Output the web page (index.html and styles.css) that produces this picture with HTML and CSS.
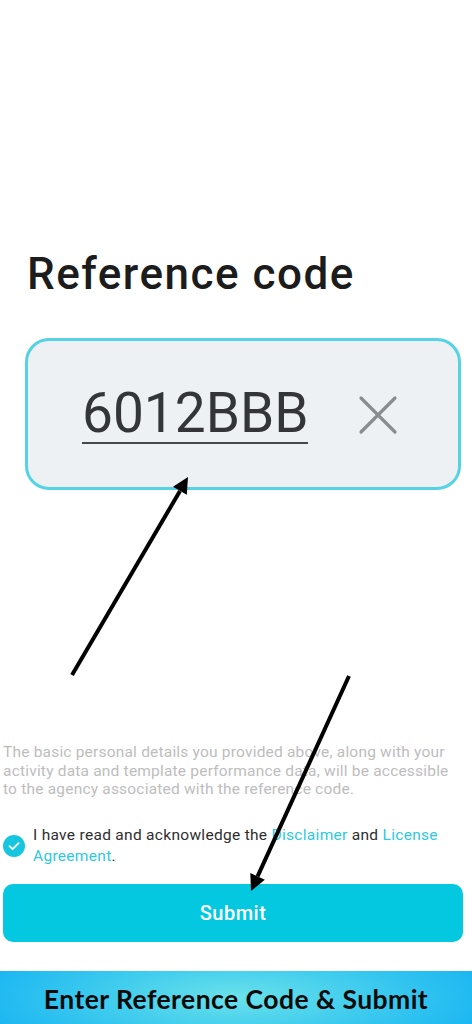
FILE: index.html
```html
<!DOCTYPE html>
<html lang="en">
<head>
<meta charset="utf-8">
<title>Reference code</title>
<link rel="stylesheet" href="styles.css">
</head>
<body>
<div class="screen">
  <h1 class="title">Reference code</h1>
  <div class="code-box">
    <span class="code-value">6012BBB</span>
    <svg class="clear-icon" viewBox="0 0 40 40" width="40" height="40" aria-hidden="true">
      <path d="M3 3 L37 37 M37 3 L3 37" stroke="#8a8d90" stroke-width="3.2" stroke-linecap="round" fill="none"/>
    </svg>
  </div>
  <p class="disclaimer">The basic personal details you provided above, along with your activity data and template performance data, will be accessible to the agency associated with the reference code.</p>
  <div class="agree-row">
    <span class="check">
      <svg viewBox="0 0 22 22" width="22" height="22" aria-hidden="true">
        <circle cx="11" cy="11" r="11" fill="#16c6df"/>
        <path d="M6.5 11.2 L9.6 14.2 L15.6 8.2" stroke="#ffffff" stroke-width="1.8" fill="none" stroke-linecap="round" stroke-linejoin="round"/>
      </svg>
    </span>
    <p class="agree-text">I have read and acknowledge the <a class="link">Disclaimer</a> and <a class="link">License Agreement</a>.</p>
  </div>
  <button class="submit">Submit</button>
  <div class="banner">Enter Reference Code &amp; Submit</div>

  <svg class="arrows" viewBox="0 0 472 1024" width="472" height="1024" aria-hidden="true">
    <line x1="72" y1="675" x2="180" y2="491" stroke="#000" stroke-width="4"/>
    <polygon points="188,477 186.8,494.8 173,486.8" fill="#000"/>
    <line x1="349" y1="676" x2="257.6" y2="876.4" stroke="#000" stroke-width="4"/>
    <polygon points="251,891 264.9,879.7 250.3,873.1" fill="#000"/>
  </svg>
</div>
</body>
</html>
```

FILE: styles.css
```css
html, body {
  margin: 0;
  padding: 0;
  background: #ffffff;
}

.screen {
  position: relative;
  width: 472px;
  height: 1024px;
  overflow: hidden;
  padding-top: 248px;
  box-sizing: border-box;
  display: flex;
  flex-direction: column;
  font-family: Roboto, "Noto Sans", "Liberation Sans", sans-serif;
}

.title {
  margin: 0 0 0 27px;
  font-size: 44px;
  line-height: 52px;
  font-weight: 500;
  color: #1c1c1c;
  letter-spacing: 1.5px;
}

.code-box {
  margin: 38px 0 0 25px;
  width: 436px;
  height: 152px;
  box-sizing: border-box;
  border: 3px solid #55d3e4;
  border-radius: 24px;
  background: #eef1f3;
  display: flex;
  align-items: center;
  padding-left: 54px;
}

.code-value {
  font-size: 55px;
  line-height: 58px;
  color: #333538;
  border-bottom: 2px solid #45474a;
  margin-top: 0;
}

.clear-icon {
  margin-left: 50px;
  margin-top: 2px;
}

.disclaimer {
  margin: 253px 0 0 3px;
  width: 462px;
  font-size: 15.5px;
  line-height: 18.5px;
  letter-spacing: 0.2px;
  color: #bdbdbd;
}

.agree-row {
  margin-top: 26px;
  display: flex;
  align-items: center;
}

.check {
  display: flex;
  margin-left: 3px;
  margin-right: 8px;
}

.agree-text {
  margin: 0;
  width: 430px;
  font-size: 15.5px;
  line-height: 21px;
  letter-spacing: 0.3px;
  color: #2e2e2e;
}

.link {
  color: #2ec9de;
}

.submit {
  margin: 17px 0 0 3px;
  width: 460px;
  height: 58px;
  border: none;
  border-radius: 10px;
  background: #03c8df;
  color: #ffffff;
  font-family: Roboto, "Noto Sans", "Liberation Sans", sans-serif;
  font-size: 20px;
  font-weight: 500;
  letter-spacing: 0.5px;
}

.banner {
  margin-top: 29px;
  height: 53px;
  box-sizing: border-box;
  padding-top: 4px;
  display: flex;
  align-items: center;
  justify-content: center;
  background: radial-gradient(ellipse 60% 140% at 50% 50%, #6ae2ea 0%, #3ccaee 50%, #14b2f3 100%);
  font-family: Lato, "Liberation Sans", sans-serif;
  font-weight: 700;
  font-size: 26.5px;
  letter-spacing: 0.45px;
  color: #0a0a0a;
}

.arrows {
  position: absolute;
  left: 0;
  top: 0;
  pointer-events: none;
}
```
